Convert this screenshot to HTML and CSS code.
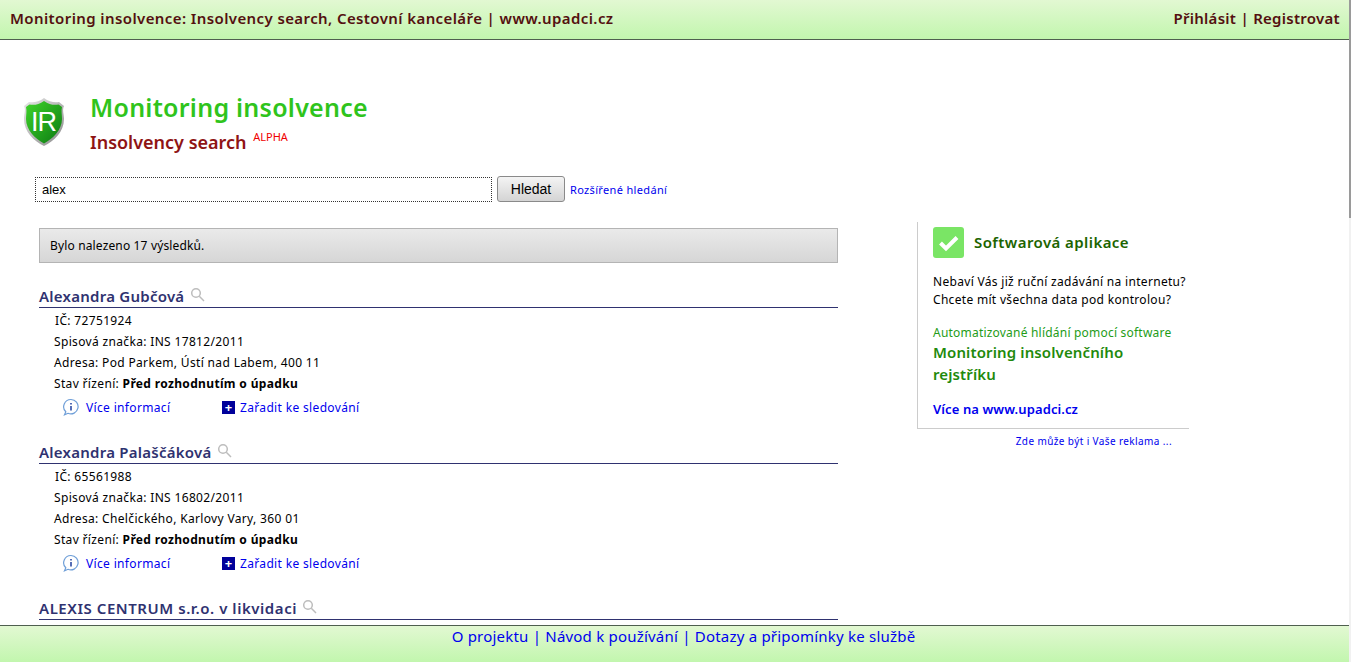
FILE: index.html
```html
<!DOCTYPE html>
<html lang="cs">
<head>
    <meta charset="UTF-8">
    <title>Monitoring insolvence: Insolvency search</title>
    <link rel="stylesheet" href="styles.css">
</head>
<body>

    <!-- Top bar -->
    <header class="topbar">
        <span>Monitoring insolvence: Insolvency search, Cestovní kanceláře | www.upadci.cz</span>
        <span class="topbar-user">Přihlásit | Registrovat</span>
    </header>

    <main class="page">
        <div class="brand">
            <svg class="brand-logo" width="42" height="50" viewBox="0 0 42 50">
                <defs>
                    <linearGradient id="shieldRim" x1="0" y1="0" x2="1" y2="1">
                        <stop offset="0" stop-color="#e8e8e8"/>
                        <stop offset="1" stop-color="#8a8a8a"/>
                    </linearGradient>
                    <linearGradient id="shieldFill" x1="0" y1="0" x2="1" y2="1">
                        <stop offset="0" stop-color="#3fd42a"/>
                        <stop offset="1" stop-color="#0c7a12"/>
                    </linearGradient>
                </defs>
                <path d="M21 1 C26 5 32 6 36 5 L41 9 C39 13 41 17 41 22 C41 35 31 44 21 49 C11 44 1 35 1 22 C1 17 3 13 1 9 L6 5 C10 6 16 5 21 1 Z" fill="url(#shieldRim)"/>
                <path d="M21 4 C26 7.500 31 8.500 35.500 7.500 L39 10 C38 14 39 18 39 22 C39 33 29.500 42 21 46.500 C12.500 42 3 33 3 22 C3 18 4 14 3 10 L6.500 7.500 C11 8.500 16 7.500 21 4 Z" fill="url(#shieldFill)"/>
                <text class="brand-logo-text" x="20.500" y="34" text-anchor="middle">IR</text>
            </svg>
            <div>
                <h1 class="brand-title">Monitoring insolvence</h1>
                <h2 class="brand-sub">Insolvency search <sup class="alpha">ALPHA</sup></h2>
            </div>
        </div>

        <form class="search">
            <input class="search-input" type="text" value="alex">
            <button class="search-btn" type="button">Hledat</button>
            <a class="search-more" href="#">Rozšířené hledání</a>
        </form>

        <div class="columns">
            <section class="results">
                <div class="count">Bylo nalezeno 17 výsledků.</div>

                <article class="item">
                    <h3 class="item-name">Alexandra Gubčová
                        <svg class="lens" width="15" height="15" viewBox="0 0 15 15"><circle cx="6" cy="6" r="4.300"/><path d="M9.300 9.300 L14 14"/></svg>
                    </h3>
                    <p class="item-row item-ic">IČ: 72751924</p>
                    <p class="item-row">Spisová značka: INS 17812/2011</p>
                    <p class="item-row">Adresa: Pod Parkem, Ústí nad Labem, 400 11</p>
                    <p class="item-row">Stav řízení: <b>Před rozhodnutím o úpadku</b></p>
                    <div class="item-links">
                        <a class="link-info" href="#">
                            <svg width="18" height="18" viewBox="0 0 18 18"><path class="info-ring" d="M9 1.500 A7.200 7.200 0 1 1 6 15.300 L2.500 16.800 L3.800 13.800 A7.200 7.200 0 0 1 9 1.500 Z"/><path class="info-i" d="M9 5 V6.500 M9 8 V12.500"/></svg>
                            Více informací
                        </a>
                        <a class="link-watch" href="#"><span class="plus">+</span>Zařadit ke sledování</a>
                    </div>
                </article>

                <article class="item">
                    <h3 class="item-name">Alexandra Palaščáková
                        <svg class="lens" width="15" height="15" viewBox="0 0 15 15"><circle cx="6" cy="6" r="4.300"/><path d="M9.300 9.300 L14 14"/></svg>
                    </h3>
                    <p class="item-row item-ic">IČ: 65561988</p>
                    <p class="item-row">Spisová značka: INS 16802/2011</p>
                    <p class="item-row">Adresa: Chelčického, Karlovy Vary, 360 01</p>
                    <p class="item-row">Stav řízení: <b>Před rozhodnutím o úpadku</b></p>
                    <div class="item-links">
                        <a class="link-info" href="#">
                            <svg width="18" height="18" viewBox="0 0 18 18"><path class="info-ring" d="M9 1.500 A7.200 7.200 0 1 1 6 15.300 L2.500 16.800 L3.800 13.800 A7.200 7.200 0 0 1 9 1.500 Z"/><path class="info-i" d="M9 5 V6.500 M9 8 V12.500"/></svg>
                            Více informací
                        </a>
                        <a class="link-watch" href="#"><span class="plus">+</span>Zařadit ke sledování</a>
                    </div>
                </article>

                <article class="item">
                    <h3 class="item-name item-name-caps">ALEXIS CENTRUM s.r.o. v likvidaci
                        <svg class="lens" width="15" height="15" viewBox="0 0 15 15"><circle cx="6" cy="6" r="4.300"/><path d="M9.300 9.300 L14 14"/></svg>
                    </h3>
                </article>
            </section>

            <aside class="side">
                <div class="promo">
                    <div class="promo-head">
                        <span class="promo-check">
                            <svg width="31" height="31" viewBox="0 0 31 31"><path d="M7.500 16 L13 21.500 L24 10.500"/></svg>
                        </span>
                        <h3 class="promo-title">Softwarová aplikace</h3>
                    </div>
                    <p class="promo-text">Nebaví Vás již ruční zadávání na internetu?<br>Chcete mít všechna data pod kontrolou?</p>
                    <p class="promo-small">Automatizované hlídání pomocí software</p>
                    <p class="promo-big">Monitoring insolvenčního rejstříku</p>
                    <a class="promo-link" href="#">Více na www.upadci.cz</a>
                </div>
                <a class="ad-link" href="#">Zde může být i Vaše reklama ...</a>
            </aside>
        </div>
    </main>

    <footer class="bottombar">
        <a href="#">O projektu</a> | <a href="#">Návod k používání</a> | <a href="#">Dotazy a připomínky ke službě</a>
    </footer>

    <!-- Sliver of the window scrollbar at the right edge -->
    <div class="scrollbar"><div class="scrollbar-thumb"></div></div>

</body>
</html>
```

FILE: styles.css
```css
* {
    box-sizing: border-box;
}
html, body {
    height: 100%;
    overflow: hidden;
}
body {
    margin: 0;
    display: flex;
    flex-direction: column;
    font-family: "Noto Sans", "DejaVu Sans", sans-serif;
    font-size: 12px;
    letter-spacing: 0.34px;
    color: #000;
    background-color: #fff;
}
a {
    color: #0000ee;
    text-decoration: none;
}

.topbar {
    flex: none;
    height: 40px;
    padding: 0 11px 3px 10px;
    display: flex;
    justify-content: space-between;
    align-items: center;
    border-bottom: 1px solid #4f5f4f;
    background: linear-gradient(#e2f8d2, #c2f6ae);
    color: #541010;
    font-size: 15px;
    font-weight: 600;
    letter-spacing: 0.4px;
}
.topbar-user {
    letter-spacing: 0.28px;
}

.scrollbar {
    position: absolute;
    top: 0;
    right: 0;
    bottom: 0;
    width: 2px;
    background-color: #f1f1f1;
}
.scrollbar-thumb {
    height: 218px;
    background-color: #9a9a9a;
}

.page {
    flex: 1;
    min-height: 0;
    overflow: hidden;
    padding: 51px 0 0 23px;
}

.brand {
    display: flex;
    gap: 25px;
}
.brand-logo {
    margin-top: 6px;
}
.brand-logo-text {
    font-family: "Liberation Sans", sans-serif;
    font-size: 27px;
    letter-spacing: -1px;
    fill: #fff;
}
.brand-title {
    margin: 0;
    font-size: 25px;
    line-height: 32px;
    font-weight: 600;
    letter-spacing: 0.25px;
    color: #2fc41c;
}
.brand-sub {
    margin: 6px 0 0;
    font-size: 18px;
    line-height: 26px;
    font-weight: 600;
    letter-spacing: 0;
    color: #8f1414;
}
.alpha {
    margin-left: 2px;
    font-size: 11px;
    color: #f00000;
    font-weight: 400;
    vertical-align: 8px;
    line-height: 0;
}

.search {
    display: flex;
    align-items: center;
    margin: 22px 0 0 12px;
}
.search-input {
    width: 457px;
    height: 25px;
    padding: 0 6px;
    border: 1px dotted #333;
    outline: none;
    font-family: "Liberation Sans", sans-serif;
    font-size: 13px;
}
.search-btn {
    width: 68px;
    height: 26px;
    margin: -1px 0 0 5px;
    border: 1px solid #8a8a8a;
    border-radius: 3px;
    background: linear-gradient(#f4f4f4, #d4d4d4);
    font-family: "Liberation Sans", sans-serif;
    font-size: 14px;
}
.search-more {
    margin-left: 5px;
    font-size: 11px;
}

.columns {
    display: flex;
    margin-top: 19px;
}
.results {
    width: 799px;
    margin: 7px 0 0 16px;
}
.count {
    height: 35px;
    padding-left: 10px;
    line-height: 34px;
    letter-spacing: 0.15px;
    border: 1px solid #b4b4b4;
    background: linear-gradient(#eaeaea, #d6d6d6);
}

.item {
    margin-bottom: 20px;
}
.count + .item {
    margin-top: 21px;
}
.item-name {
    margin: 0 0 2px;
    height: 24px;
    line-height: 24px;
    border-bottom: 1px solid #2f3270;
    color: #2f3270;
    font-size: 15px;
    font-weight: 600;
    letter-spacing: 0.25px;
}
.item-name-caps {
    letter-spacing: 0.55px;
}
.lens {
    vertical-align: 0;
    margin-left: 1px;
    fill: none;
    stroke: #bdbdbd;
    stroke-width: 1.500;
}
.item-row {
    margin: 0;
    padding-left: 15px;
    height: 21px;
    line-height: 21px;
}
.item-ic {
    padding-left: 16px;
}
.item-links {
    display: flex;
    align-items: center;
    height: 26px;
    padding-left: 23px;
}
.link-info {
    display: flex;
    align-items: center;
    gap: 6px;
    width: 160px;
}
.info-ring {
    fill: #fff;
    stroke: #6f9fd8;
    stroke-width: 1.200;
}
.info-i {
    fill: none;
    stroke: #1f3f9f;
    stroke-width: 1.500;
}
.link-watch {
    display: flex;
    align-items: center;
    gap: 5px;
}
.plus {
    width: 13px;
    height: 13px;
    background-color: #00009a;
    color: #fff;
    font-size: 13px;
    font-weight: 700;
    line-height: 12px;
    letter-spacing: 0;
    text-align: center;
}

.side {
    width: 272px;
    margin: 1px 0 0 79px;
}
.promo {
    height: 207px;
    padding: 5px 0 0 15px;
    border-left: 1px solid #ccc;
    border-bottom: 1px solid #ccc;
}
.promo-head {
    display: flex;
    align-items: center;
    gap: 10px;
}
.promo-check {
    width: 31px;
    height: 31px;
    border-radius: 3px;
    background-color: #7ae565;
}
.promo-check svg {
    display: block;
    fill: none;
    stroke: #fff;
    stroke-width: 4;
}
.promo-title {
    margin: 0 0 2px;
    color: #1c6400;
    font-size: 15px;
    font-weight: 600;
    letter-spacing: 0.42px;
}
.promo-text {
    margin: 15px 0 0;
    line-height: 18px;
    letter-spacing: 0.31px;
}
.promo-small {
    margin: 15px 0 0;
    color: #249c18;
    line-height: 18px;
    letter-spacing: 0.21px;
}
.promo-big {
    margin: -1px 0 0;
    color: #1f8a0c;
    font-size: 15px;
    font-weight: 600;
    line-height: 22px;
    letter-spacing: 0.12px;
    width: 220px;
}
.promo-link {
    display: block;
    margin-top: 15px;
    font-size: 13px;
    font-weight: 600;
    letter-spacing: 0.1px;
}
.ad-link {
    display: block;
    margin: 5px 17px 0 0;
    text-align: right;
    font-size: 10px;
    letter-spacing: 0.39px;
}

.bottombar {
    flex: none;
    height: 37px;
    padding-left: 16px;
    border-top: 1px solid #4f5f4f;
    background: linear-gradient(#e2f8d2, #c2f6ae);
    text-align: center;
    font-size: 15px;
    letter-spacing: 0.21px;
    color: #0000ee;
}
```
